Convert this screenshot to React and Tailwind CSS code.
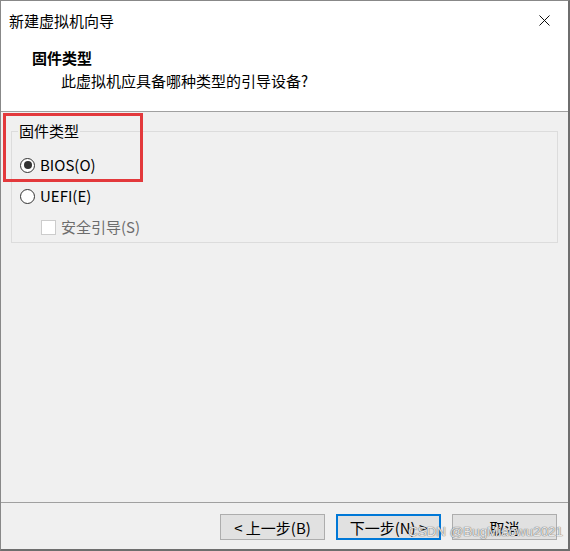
import { X } from 'lucide-react'

const font = { fontFamily: '"Noto Sans CJK SC", "Noto Sans", sans-serif' }

function Radio({ checked, label }) {
  return (
    <label className="flex items-center h-5 gap-[5px] text-[15px] text-black">
      <span className="w-[15px] h-[15px] rounded-full border border-[#333] bg-white grid place-items-center">
        {checked && <span className="w-[8px] h-[8px] rounded-full bg-[#333]" />}
      </span>
      {label}
    </label>
  )
}

function Btn({ children, primary }) {
  return (
    <button
      className={
        'w-[105px] h-[26px] text-[15px] leading-none bg-[#e1e1e1] text-black ' +
        (primary ? 'border-2 border-[#0078d7]' : 'border border-[#adadad]')
      }
    >
      {children}
    </button>
  )
}

export default function App() {
  return (
    <div
      className="relative w-[570px] h-[551px] flex flex-col bg-[#f0f0f0] border-t border-l border-[#888] border-r-2 border-b-2 border-r-[#6e6e6e] border-b-[#6e6e6e] overflow-hidden"
      style={font}
    >
      {/* title bar */}
      <div className="h-[39px] bg-white flex items-center justify-between pl-[8px] pr-[14px]">
        <span className="text-[15px] leading-5 text-black">新建虚拟机向导</span>
        <X size={19} strokeWidth={1.2} className="text-black" />
      </div>

      {/* header */}
      <div className="bg-white pl-[31px] pt-[8px] pb-[20px] border-b border-[#a0a0a0]">
        <div className="text-[15px] leading-5 font-bold text-black">固件类型</div>
        <div className="text-[15px] leading-5 mt-[3px] pl-[29px] text-black">此虚拟机应具备哪种类型的引导设备?</div>
      </div>

      {/* body */}
      <div className="flex-1 px-[10px] pt-[9px]">
        <fieldset className="border border-[#dcdcdc] px-[8px] pb-[5px]">
          <legend className="text-[15px] leading-5 px-[1px] ml-[-2px] text-black">固件类型</legend>
          <div className="flex flex-col gap-[11px] pt-[14px]">
            <Radio checked label="BIOS(O)" />
            <Radio label="UEFI(E)" />
            <label className="flex items-center h-5 gap-[5px] pl-[21px] text-[15px] text-[#6d6d6d]">
              <span className="w-[15px] h-[15px] border border-[#cccccc] bg-white" />
              安全引导(S)
            </label>
          </div>
        </fieldset>
      </div>

      {/* footer */}
      <div className="h-[47px] border-t border-[#a0a0a0] flex justify-end gap-[11px] pt-[11px] pr-[11px]">
        <Btn>&lt; 上一步(B)</Btn>
        <Btn primary>下一步(N) &gt;</Btn>
        <Btn>取消</Btn>
      </div>

      {/* highlight box */}
      <div className="absolute left-[2px] top-[112px] w-[140px] h-[69px] border-[3px] border-[#e3393c]" />

      {/* watermark */}
      <div
        className="absolute left-[407px] top-[521px] whitespace-nowrap text-[13.4px] leading-5 text-white/85"
        style={{ fontFamily: '"Liberation Sans", Arial, sans-serif', textShadow: '0 0 1px #555, 0 0 1px #777' }}
      >
        CSDN @BugMiaowu2021
      </div>
    </div>
  )
}
